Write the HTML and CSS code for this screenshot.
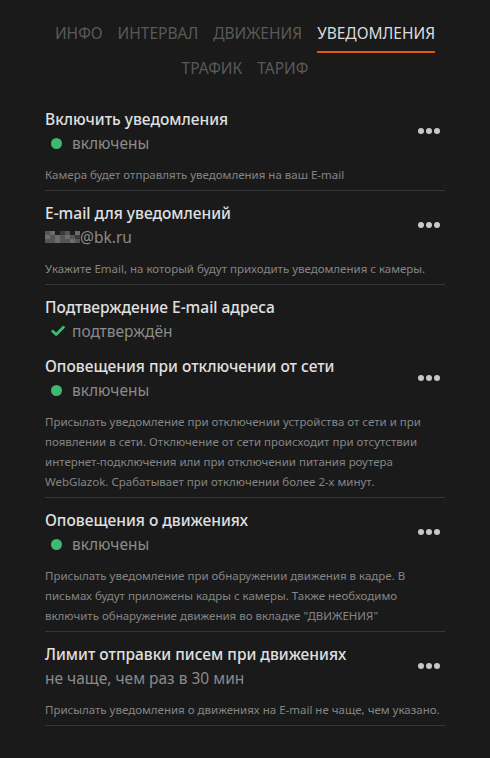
FILE: index.html
```html
<!DOCTYPE html>
<html lang="ru">
<head>
    <meta charset="UTF-8">
    <meta name="viewport" content="width=device-width, initial-scale=1.0">
    <title>Уведомления</title>
    <link rel="stylesheet" href="styles.css">
</head>
<body>
    <!-- Tabs -->
    <div class="tabs">
        <div class="tab-row">
            <a href="#">Инфо</a>
            <a href="#">Интервал</a>
            <a href="#">Движения</a>
            <a href="#" class="active">Уведомления</a>
        </div>
        <div class="tab-row">
            <a href="#">Трафик</a>
            <a href="#">Тариф</a>
        </div>
    </div>

    <!-- Settings list -->
    <div class="settings">
        <div class="item">
            <div class="head">
                <div class="info">
                    <div class="title">Включить уведомления</div>
                    <div class="status"><span class="dot"></span>включены</div>
                </div>
                <div class="more"><span></span><span></span><span></span></div>
            </div>
            <div class="desc">Камера будет отправлять уведомления на ваш E-mail</div>
        </div>

        <div class="item">
            <div class="head">
                <div class="info">
                    <div class="title">E-mail для уведомлений</div>
                    <div class="status plain">
                        <span class="masked">
                            <i class="c1"></i><i class="c2"></i><i class="c0"></i><i class="c3"></i><i class="c1"></i><i class="c0"></i><i class="c2"></i>
                            <i class="c2"></i><i class="c1"></i><i class="c2"></i><i class="c1"></i><i class="c2"></i><i class="c1"></i><i class="c3"></i>
                            <i class="c1"></i><i class="c1"></i><i class="c2"></i><i class="c1"></i><i class="c1"></i><i class="c2"></i><i class="c1"></i>
                        </span>@bk.ru
                    </div>
                </div>
                <div class="more"><span></span><span></span><span></span></div>
            </div>
            <div class="desc">Укажите Email, на который будут приходить уведомления с камеры.</div>
        </div>

        <div class="item bare">
            <div class="head">
                <div class="info">
                    <div class="title">Подтверждение E-mail адреса</div>
                    <div class="status">
                        <svg class="check" width="14" height="12" viewBox="0 0 14 12">
                            <path d="M1.8 6.2 L5.2 9.6 L12.4 2.2" fill="none" stroke="#3dba6f" stroke-width="2.8" stroke-linecap="round" stroke-linejoin="round"/>
                        </svg>подтверждён
                    </div>
                </div>
            </div>
        </div>

        <div class="item">
            <div class="head">
                <div class="info">
                    <div class="title">Оповещения при отключении от сети</div>
                    <div class="status"><span class="dot"></span>включены</div>
                </div>
                <div class="more"><span></span><span></span><span></span></div>
            </div>
            <div class="desc">Присылать уведомление при отключении устройства от сети и при появлении в сети. Отключение от сети происходит при отсутствии интернет-подключения или при отключении питания роутера WebGlazok. Срабатывает при отключении более 2-х минут.</div>
        </div>

        <div class="item">
            <div class="head">
                <div class="info">
                    <div class="title">Оповещения о движениях</div>
                    <div class="status"><span class="dot"></span>включены</div>
                </div>
                <div class="more"><span></span><span></span><span></span></div>
            </div>
            <div class="desc">Присылать уведомление при обнаружении движения в кадре. В письмах будут приложены кадры с камеры. Также необходимо включить обнаружение движения во вкладке "ДВИЖЕНИЯ"</div>
        </div>

        <div class="item">
            <div class="head">
                <div class="info">
                    <div class="title">Лимит отправки писем при движениях</div>
                    <div class="status plain">не чаще, чем раз в 30 мин</div>
                </div>
                <div class="more"><span></span><span></span><span></span></div>
            </div>
            <div class="desc">Присылать уведомления о движениях на E-mail не чаще, чем указано.</div>
        </div>
    </div>
</body>
</html>
```

FILE: styles.css
```css
/* Reset */
* {
    margin: 0;
    padding: 0;
    box-sizing: border-box;
}

body {
    background: #1a1a1a;
    color: #ddd;
    font-family: 'Noto Sans', 'Open Sans', sans-serif;
    width: 490px;
    min-height: 758px;
}

/* Tabs */
.tabs {
    padding-top: 22px;
    display: flex;
    flex-direction: column;
    align-items: center;
    gap: 4px;
}

.tab-row {
    display: flex;
    justify-content: center;
    gap: 15px;
}

.tab-row a {
    text-decoration: none;
    text-transform: uppercase;
    color: #595959;
    font-size: 15.5px;
    line-height: 22px;
    padding-bottom: 7px;
    border-bottom: 2px solid transparent;
}

.tab-row a.active {
    color: #dcdcdc;
    border-bottom-color: #e8560e;
}

/* Settings list */
.settings {
    width: 400px;
    margin: 9px auto 0;
}

.item {
    padding: 10px 0 5px;
    border-bottom: 1px solid #363636;
}

.item.bare {
    border-bottom: none;
    padding-bottom: 1px;
}

.head {
    display: flex;
    align-items: center;
    justify-content: space-between;
}

.title {
    font-size: 15.5px;
    line-height: 24px;
    font-weight: 500;
    color: #e0e0e0;
}

.status {
    display: flex;
    align-items: center;
    font-size: 15.5px;
    line-height: 24px;
    color: #8a8a8a;
    padding-left: 6px;
}

.status.plain {
    padding-left: 0;
}

.dot {
    width: 11px;
    height: 11px;
    border-radius: 50%;
    background: #3dba6f;
    margin-right: 10px;
}

.check {
    margin-right: 7px;
}

/* pixelated part of the address */
.masked {
    display: grid;
    grid-template-columns: repeat(7, 5px);
    grid-auto-rows: 4px;
}

.masked i.c0 { background: #1e1e1e; }
.masked i.c1 { background: #555; }
.masked i.c2 { background: #6c6c6c; }
.masked i.c3 { background: #3a3a3a; }

/* three-dot menu */
.more {
    display: flex;
    gap: 2px;
    padding-right: 5px;
}

.more span {
    width: 6px;
    height: 6px;
    border-radius: 50%;
    background: #c8c8c8;
}

.desc {
    margin-top: 10px;
    font-size: 11.5px;
    line-height: 20px;
    color: #858585;
}
```
